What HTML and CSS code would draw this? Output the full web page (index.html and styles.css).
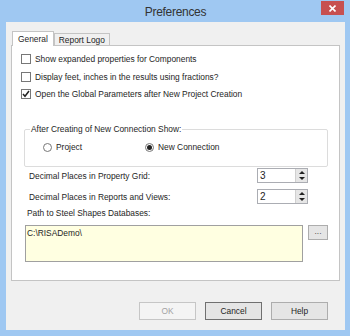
FILE: index.html
```html
<!DOCTYPE html>
<html lang="en">
<head>
  <meta charset="UTF-8">
  <title>Preferences</title>
  <link rel="stylesheet" href="styles.css">
</head>
<body>

<div class="window">
  <div class="titlebar">
    <span></span>
    <span class="title">Preferences</span>
    <span class="close">
      <svg width="7" height="7" viewBox="0 0 7 7"><path d="M0.5 0.5 L6.5 6.5 M6.5 0.5 L0.5 6.5" stroke="#fff" stroke-width="1.6"/></svg>
    </span>
  </div>

  <div class="client">
    <div class="tabs">
      <div class="tab active">General</div>
      <div class="tab">Report Logo</div>
    </div>

    <div class="panel">
      <div class="checks">
        <label class="check"><span class="box"></span>Show expanded properties for Components</label>
        <label class="check"><span class="box"></span>Display feet, inches in the results using fractions?</label>
        <label class="check"><span class="box"><svg width="8" height="8" viewBox="0 0 8 8"><path d="M1 4 L3 6.3 L7 1" fill="none" stroke="#222" stroke-width="1.5"/></svg></span>Open the Global Parameters after New Project Creation</label>
      </div>

      <fieldset class="group">
        <legend>After Creating of New Connection Show:</legend>
        <div class="radios">
          <label class="radio"><span class="dot"></span>Project</label>
          <label class="radio"><span class="dot on"></span>New Connection</label>
        </div>
      </fieldset>

      <div class="field first">
        <span>Decimal Places in Property Grid:</span>
        <div class="spin"><span class="val">3</span><span class="arrows"><i class="up"></i><i class="down"></i></span></div>
      </div>
      <div class="field">
        <span>Decimal Places in Reports and Views:</span>
        <div class="spin"><span class="val">2</span><span class="arrows"><i class="up"></i><i class="down"></i></span></div>
      </div>

      <div class="path-label">Path to Steel Shapes Databases:</div>
      <div class="path-row">
        <div class="path-box">C:\RISADemo\</div>
        <div class="browse">...</div>
      </div>
    </div>

    <div class="actions">
      <div class="btn disabled">OK</div>
      <div class="btn default">Cancel</div>
      <div class="btn">Help</div>
    </div>
  </div>
</div>

</body>
</html>
```

FILE: styles.css
```css
body {
  margin: 0;
  font-family: "Liberation Sans", Arial, sans-serif;
  font-size: 8.4px;
  color: #1e1e1e;
}
.window {
  width: 350px;
  height: 336px;
  box-sizing: border-box;
  padding: 0 5px 6px 6px;
  background-color: #9fc8f2;
  display: flex;
  flex-direction: column;
}
.titlebar {
  height: 22px;
  display: grid;
  grid-template-columns: 1fr auto 1fr;
  align-items: start;
}
.title {
  font-size: 12px;
  letter-spacing: -0.3px;
  color: #333;
  margin-top: 5px;
}
.close {
  justify-self: end;
  width: 23px;
  height: 14px;
  margin-top: 1px;
  margin-right: 1px;
  background-color: #c75050;
  display: flex;
  align-items: center;
  justify-content: center;
}
.client {
  flex: 1;
  background-color: #f0f0f0;
  padding: 9px 5px 0 5px;
}
.tabs {
  display: flex;
  align-items: flex-end;
  height: 14px;
  padding-left: 1px;
}
.tab {
  height: 12px;
  line-height: 12px;
  padding: 0 4px;
  border: 1px solid #c4c4c4;
  border-bottom: none;
  background-color: #f0f0f0;
  box-sizing: border-box;
}
.tab.active {
  height: 15px;
  margin-bottom: -1px;
  background-color: #fff;
  padding: 1px 5px 0 5px;
  line-height: 12px;
  position: relative;
  z-index: 1;
}
.panel {
  height: 236px;
  box-sizing: border-box;
  border: 1px solid #c4c4c4;
  background-color: #fff;
  padding: 8px 0 0 9px;
}
.checks {
  display: flex;
  flex-direction: column;
  gap: 7.5px;
}
.check {
  display: flex;
  align-items: center;
  height: 10px;
}
.box {
  width: 10px;
  height: 10px;
  box-sizing: border-box;
  border: 1px solid #777;
  background-color: #fff;
  margin-right: 4px;
  display: flex;
  align-items: center;
  justify-content: center;
}
.group {
  margin: 25px 11px 0 3px;
  padding: 8px 0 14px 5px;
  border: 1px solid #dcdcdc;
  border-radius: 2px;
}
.group legend {
  padding: 0 1px;
}
.radios {
  display: flex;
  padding-left: 13px;
}
.radio {
  display: flex;
  align-items: center;
  width: 102px;
}
.dot {
  width: 9px;
  height: 9px;
  box-sizing: border-box;
  border: 1px solid #777;
  border-radius: 50%;
  background-color: #fff;
  margin-right: 4px;
  display: flex;
  align-items: center;
  justify-content: center;
}
.dot.on::after {
  content: "";
  width: 5px;
  height: 5px;
  border-radius: 50%;
  background-color: #222;
}
.field {
  display: flex;
  justify-content: space-between;
  align-items: center;
  margin: 6px 31px 0 8px;
}
.field.first {
  margin-top: 1px;
}
.spin {
  display: flex;
  width: 51px;
  height: 15px;
  box-sizing: border-box;
  border: 1px solid #abadb3;
  background-color: #fff;
}
.val {
  flex: 1;
  padding: 1px 0 0 2px;
  font-size: 10px;
}
.arrows {
  width: 11px;
  display: flex;
  flex-direction: column;
  border-left: 1px solid #d0d0d0;
  background-color: #e6e6e6;
}
.arrows i {
  flex: 1;
  display: flex;
  align-items: center;
  justify-content: center;
}
.arrows i::after {
  content: "";
  border-left: 3px solid transparent;
  border-right: 3px solid transparent;
}
.arrows .up::after {
  border-bottom: 3px solid #222;
}
.arrows .down::after {
  border-top: 3px solid #222;
}
.path-label {
  margin: 4px 0 0 6px;
}
.path-row {
  display: flex;
  align-items: flex-start;
  gap: 5px;
  margin-top: 7px;
  padding-left: 4px;
}
.path-box {
  width: 278px;
  height: 37px;
  box-sizing: border-box;
  border: 1px solid #a0a0a0;
  background-color: #ffffe1;
  padding: 2px 0 0 1px;
}
.browse {
  width: 20px;
  height: 15px;
  box-sizing: border-box;
  border: 1px solid #adadad;
  background-color: #e5e5e5;
  text-align: center;
  line-height: 11px;
  color: #555;
}
.actions {
  display: flex;
  justify-content: flex-end;
  gap: 9px;
  margin-top: 21px;
  padding-right: 12px;
}
.btn {
  width: 57px;
  height: 18px;
  box-sizing: border-box;
  border: 1px solid #adadad;
  background-color: #e5e5e5;
  text-align: center;
  line-height: 16px;
}
.btn.disabled {
  border-color: #c6c6c6;
  background-color: #f4f4f4;
  color: #a3a3a3;
}
.btn.default {
  border-color: #707070;
}
```
